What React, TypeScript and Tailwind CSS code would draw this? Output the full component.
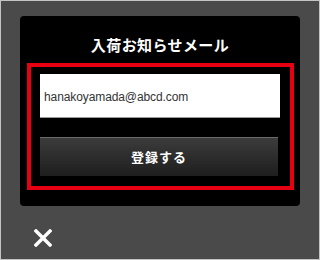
export default function App() {
  return (
    <div className="w-[320px] h-[260px] bg-[#4a4a4a] border border-[#c4c4c4] overflow-hidden flex flex-col">
      <div className="ml-[19px] mt-[15px] w-[280px] h-[190px] bg-black rounded-[4px] flex flex-col">
        <h2
          className="mt-[19px] text-center text-white text-[15px] font-bold tracking-[0.4px] leading-[20px]"
          style={{ fontFamily: '"Noto Sans CJK JP", sans-serif' }}
        >
          入荷お知らせメール
        </h2>
        <div className="mt-[8px] ml-[7px] w-[267px] h-[127px] border-[4px] border-[#e60012] pt-[7px] pl-[9px]">
          <div
            className="w-[240px] h-[44px] bg-white border-b border-[#9a9a9a] flex items-center pl-[4px] pt-[2px] text-[12px] tracking-[-0.1px] text-[#333]"
            style={{ fontFamily: '"Liberation Sans", Arial, sans-serif' }}
          >
            hanakoyamada@abcd.com
          </div>
          <button
            className="mt-[19px] w-[238px] h-[39px] bg-gradient-to-b from-[#3c3c3c] to-[#1e1e1e] border-t border-[#6a6a6a] text-white text-[13px] font-bold tracking-[1px] flex items-center justify-center"
            style={{ fontFamily: '"Noto Sans CJK JP", sans-serif' }}
          >
            登録する
          </button>
        </div>
      </div>
      <div className="ml-[33px] mt-[23px]">
        <svg width="18" height="18" viewBox="0 0 18 18">
          <path d="M2 2 L16 16 M16 2 L2 16" stroke="white" strokeWidth="3.4" strokeLinecap="square" />
        </svg>
      </div>
    </div>
  );
}
